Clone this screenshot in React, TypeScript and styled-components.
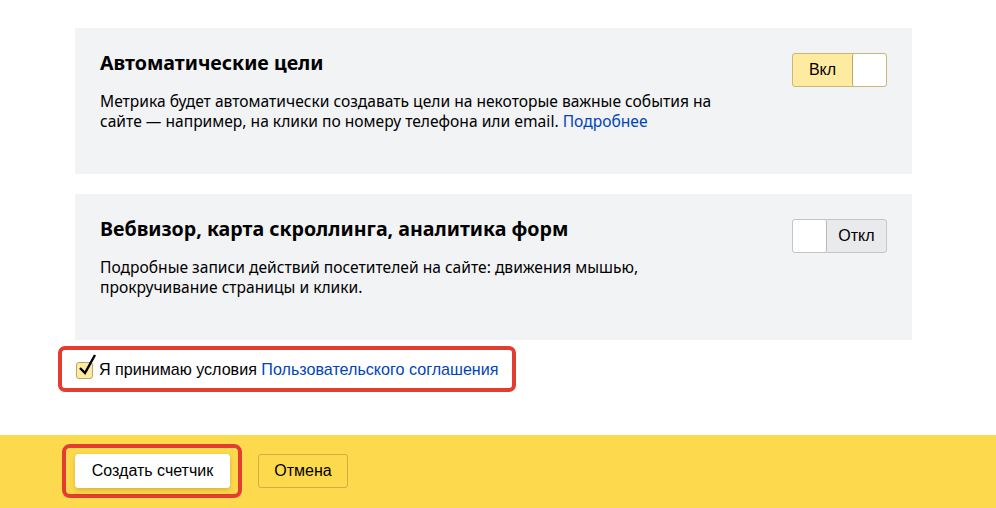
import React, { useState } from "react";
import styled, { createGlobalStyle } from "styled-components";

const Global = createGlobalStyle`
  html, body { margin: 0; padding: 0; background: #fff; }
  body { width: 996px; height: 508px; overflow: hidden; }
  * { box-sizing: border-box; }
`;

const Page = styled.div`
  width: 996px;
  height: 508px;
  display: flex;
  flex-direction: column;
  background: #fff;
`;

const Content = styled.div`
  flex: 1;
  display: flex;
  flex-direction: column;
  padding: 28px 0 0 75px;
`;

const Panels = styled.div`
  display: flex;
  flex-direction: column;
  gap: 20px;
  width: 837px;
`;

const Panel = styled.section`
  background: #f2f3f5;
  height: 146px;
  padding: 25px 25px 0 25px;
  display: flex;
  justify-content: space-between;
  align-items: flex-start;
`;

const PanelText = styled.div`
  display: flex;
  flex-direction: column;
`;

const Title = styled.h2`
  margin: 1px 0 0 0;
  font-family: "Noto Sans", "Open Sans", sans-serif;
  font-weight: 700;
  font-size: 19.6px;
  line-height: 18px;
  height: 18px;
  color: #000;
  white-space: nowrap;
`;

const Desc = styled.p`
  margin: 19px 0 0 0;
  font-family: "Noto Sans", "Open Sans", sans-serif;
  font-size: 15.6px;
  line-height: 20px;
  color: #000;
  white-space: nowrap;
`;

const Link = styled.a`
  color: #0044bb;
  text-decoration: none;
  cursor: pointer;
`;

const Toggle = styled.button<{ $on: boolean }>`
  display: flex;
  flex-direction: ${(p) => (p.$on ? "row" : "row-reverse")};
  width: 95px;
  height: 34px;
  padding: 0;
  border: 1px solid ${(p) => (p.$on ? "#c9b777" : "#c5c5c5")};
  border-radius: 3px;
  background: ${(p) => (p.$on ? "#ffeba0" : "#e9eaeb")};
  overflow: hidden;
  cursor: pointer;
  flex-shrink: 0;
`;

const ToggleLabel = styled.span`
  flex: 1;
  display: flex;
  align-items: center;
  justify-content: center;
  font-family: "Liberation Sans", Arial, sans-serif;
  font-size: 16px;
  color: #000;
`;

const Knob = styled.span<{ $on: boolean }>`
  width: 34px;
  height: 100%;
  background: #fff;
  border-radius: 2px;
  ${(p) =>
    p.$on ? "border-left: 1px solid #b9a870;" : "border-right: 1px solid #b8b8b8;"}
`;

const AgreeMark = styled.div`
  align-self: flex-start;
  margin: 6px 0 0 -17px;
  height: 46px;
  padding: 0 14px 0 14px;
  border: 4px solid #e23d30;
  border-radius: 7px;
  display: flex;
  align-items: center;
`;

const CheckLabel = styled.label`
  display: flex;
  align-items: center;
  gap: 6px;
  font-family: "Liberation Sans", Arial, sans-serif;
  font-size: 16.1px;
  color: #000;
  cursor: pointer;
  margin-top: 1px;
`;

const Box = styled.span`
  position: relative;
  width: 17px;
  height: 17px;
  border: 1px solid #b8a66c;
  border-radius: 3px;
  background: #ffeba0;
  display: inline-block;
  margin-top: 2px;
`;

const Tick = styled.svg`
  position: absolute;
  left: 1px;
  top: -10px;
  width: 20px;
  height: 24px;
  overflow: visible;
`;

const Footer = styled.footer`
  height: 73px;
  background: #fdd94e;
  display: flex;
  align-items: flex-start;
  padding: 9px 0 0 62px;
  gap: 16px;
`;

const ActionMark = styled.div`
  border: 4px solid #e23d30;
  border-radius: 8px;
  padding: 6px 8px 6px 9px;
  display: flex;
`;

const Button = styled.button<{ $primary?: boolean }>`
  height: 34px;
  padding: 0;
  font-family: "Liberation Sans", Arial, sans-serif;
  font-size: 16px;
  color: #000;
  border-radius: 3px;
  cursor: pointer;
  background: ${(p) => (p.$primary ? "#fff" : "transparent")};
  border: 1px solid ${(p) => (p.$primary ? "#fff" : "#cbb043")};
  box-shadow: ${(p) => (p.$primary ? "0 2px 5px rgba(150,110,0,0.35)" : "none")};
  width: ${(p) => (p.$primary ? "155px" : "90px")};
`;

const SecondaryWrap = styled.div`
  padding-top: 10px;
`;

export default function App() {
  const [auto, setAuto] = useState(true);
  const [webvisor, setWebvisor] = useState(false);
  const [agree, setAgree] = useState(true);
  return (
    <Page>
      <Global />
      <Content>
        <Panels>
          <Panel>
            <PanelText>
              <Title>Автоматические цели</Title>
              <Desc>
                Метрика будет автоматически создавать цели на некоторые важные события на
                <br />
                сайте — например, на клики по номеру телефона или email. <Link>Подробнее</Link>
              </Desc>
            </PanelText>
            <Toggle $on={auto} onClick={() => setAuto(!auto)}>
              <ToggleLabel>{auto ? "Вкл" : "Откл"}</ToggleLabel>
              <Knob $on={auto} />
            </Toggle>
          </Panel>
          <Panel>
            <PanelText>
              <Title>Вебвизор, карта скроллинга, аналитика форм</Title>
              <Desc>
                Подробные записи действий посетителей на сайте: движения мышью,
                <br />
                прокручивание страницы и клики.
              </Desc>
            </PanelText>
            <Toggle $on={webvisor} onClick={() => setWebvisor(!webvisor)}>
              <ToggleLabel>{webvisor ? "Вкл" : "Откл"}</ToggleLabel>
              <Knob $on={webvisor} />
            </Toggle>
          </Panel>
        </Panels>
        <AgreeMark>
          <CheckLabel onClick={() => setAgree(!agree)}>
            <Box>
              {agree && (
                <Tick viewBox="0 0 20 24">
                  <path d="M2 15 L7 20 L17 2" fill="none" stroke="#000" strokeWidth="2.4" />
                </Tick>
              )}
            </Box>
            <span>
              Я принимаю условия <Link>Пользовательского соглашения</Link>
            </span>
          </CheckLabel>
        </AgreeMark>
      </Content>
      <Footer>
        <ActionMark>
          <Button $primary>Создать счетчик</Button>
        </ActionMark>
        <SecondaryWrap>
          <Button>Отмена</Button>
        </SecondaryWrap>
      </Footer>
    </Page>
  );
}
